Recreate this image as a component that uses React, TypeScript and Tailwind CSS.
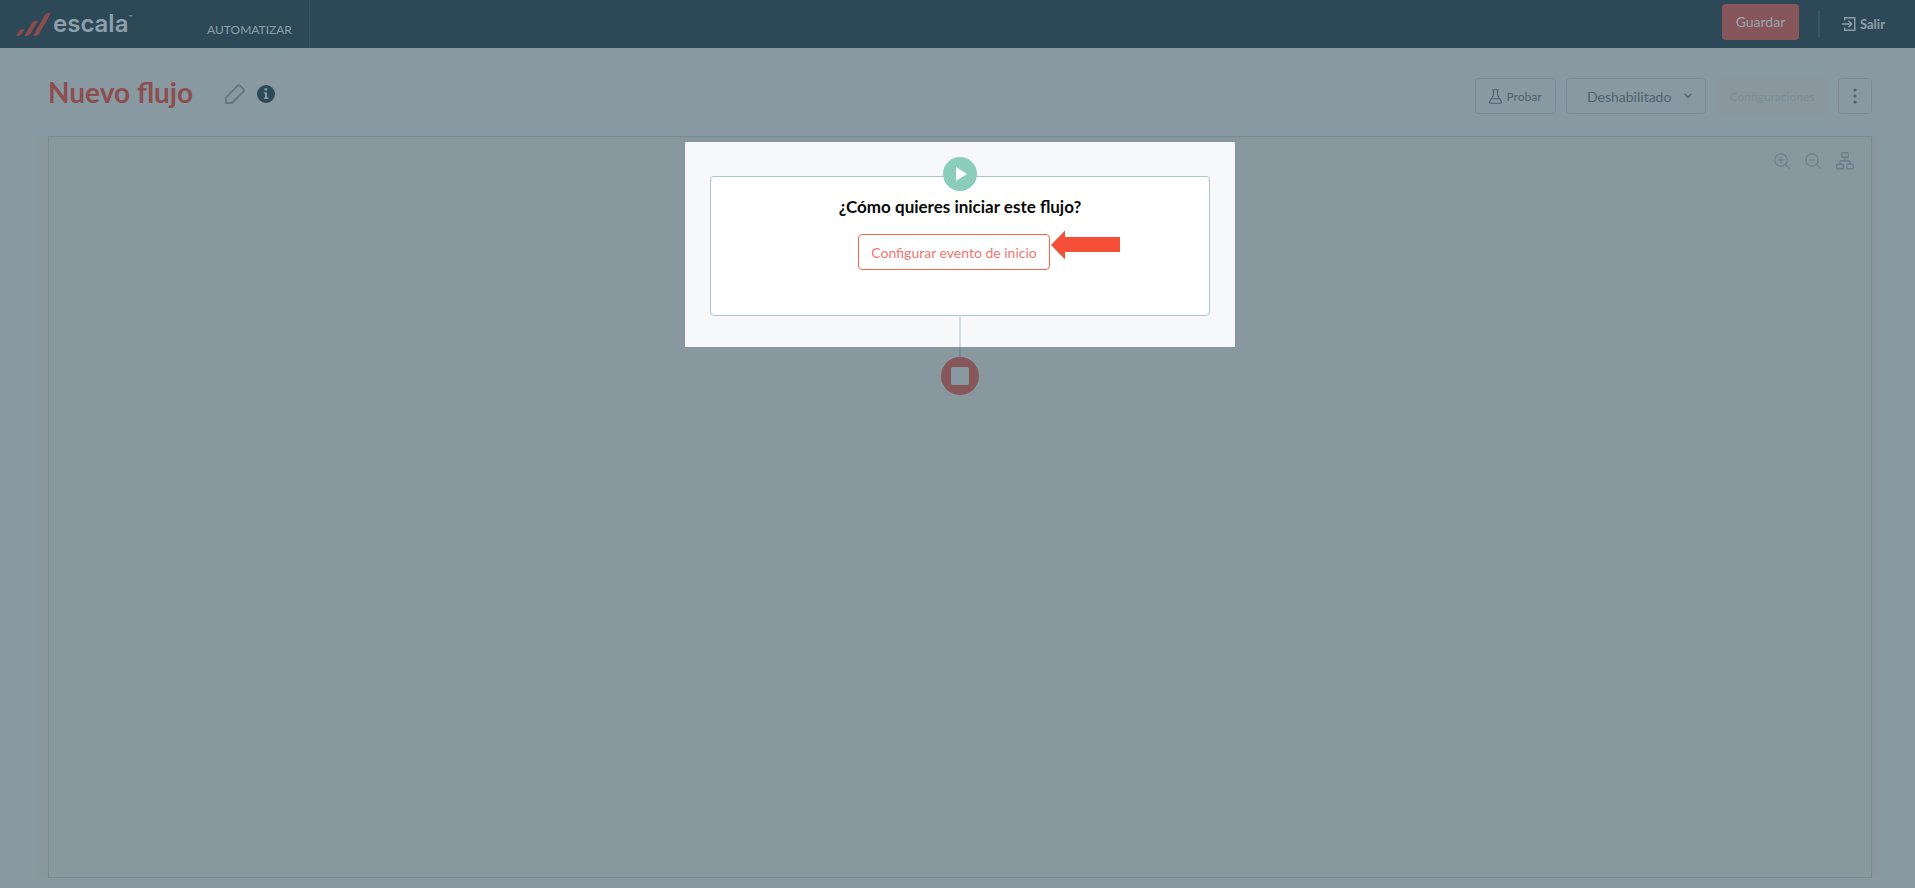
import React, { useState } from 'react'

const Logo: React.FC = () => (
  <a href="#inicio" aria-label="escala" className="flex items-center gap-0.5 text-[#8da0aa]">
    <svg width="35" height="24" viewBox="0 0 35 24" fill="#8b4c4c" aria-hidden="true">
      <path d="M0 24 L3.2 18.8 Q4.4 17 6.4 17 H8.6 L5.6 22 Q4.4 24 2.2 24 Z" />
      <path d="M8.4 24 L15.6 11.4 Q17 9 19.4 9 H22 L14.4 22 Q13.2 24 11 24 Z" />
      <path d="M17 24 L28.6 3.4 Q30 1 32.6 1 H35 L23 22 Q21.8 24 19.6 24 Z" />
    </svg>
    <span className="flex items-start font-['Inter','Lato',sans-serif]">
      <span className="text-[24px] leading-6 font-semibold">escala</span>
      <span className="text-[6px] leading-3 font-semibold">™</span>
    </span>
  </a>
)

const ExitIcon: React.FC = () => (
  <svg width="14" height="16" viewBox="0 0 14 16" fill="none" stroke="currentColor" strokeWidth="1.4" aria-hidden="true">
    <path d="M2.7 4.5 V1.7 H12.8 V14.3 H2.7 V11.5" />
    <path d="M0 8 H9.5 M6.5 4.8 L9.7 8 L6.5 11.2" />
  </svg>
)

const PencilIcon: React.FC = () => (
  <svg width="20" height="20" viewBox="0 0 20 20" fill="none" stroke="#66767f" strokeWidth="1.8" strokeLinejoin="round" aria-hidden="true">
    <path d="M1 19 V13.4 L12.4 1.9 Q13.8 0.6 15.2 1.9 L18.4 5.1 Q19.6 6.4 18.4 7.7 L6.8 19 Z" />
  </svg>
)

const InfoIcon: React.FC = () => (
  <svg width="18" height="18" viewBox="0 0 18 18" aria-hidden="true">
    <circle cx="9" cy="9" r="9" fill="#2d4a59" />
    <circle cx="8.8" cy="4.4" r="1.4" fill="#8899a1" />
    <path d="M6.8 7.2 H10 V12.4 H11.4 V14 H6.8 V12.4 H8 V8.7 H6.8 Z" fill="#8899a1" />
  </svg>
)

const FlaskIcon: React.FC = () => (
  <svg width="13" height="15" viewBox="0 0 13 15" fill="none" stroke="currentColor" strokeWidth="1.1" strokeLinejoin="round" aria-hidden="true">
    <path d="M3 0.8 H10 M4.5 0.8 V6 L0.7 12.6 Q0.2 14.2 1.6 14.2 H11.4 Q12.8 14.2 12.3 12.6 L8.5 6 V0.8 M2.4 9.8 H10.6" />
  </svg>
)

const ZoomIcon: React.FC<{ plus?: boolean }> = ({ plus }) => (
  <svg width="16" height="16" viewBox="0 0 16 16" fill="none" stroke="currentColor" strokeWidth="1.2" aria-hidden="true">
    <circle cx="7" cy="7" r="6.2" />
    <path d="M11.4 11.4 L15.5 15.5 M4 7 H10" />
    {plus && <path d="M7 4 V10" />}
  </svg>
)

const TreeIcon: React.FC = () => (
  <svg width="18" height="18" viewBox="0 0 18 18" fill="none" stroke="currentColor" strokeWidth="1.4" aria-hidden="true">
    <rect x="5.7" y="0.7" width="6.6" height="4.6" rx="0.8" />
    <rect x="0.7" y="12.2" width="6.6" height="4.6" rx="0.8" />
    <rect x="10.7" y="12.2" width="6.6" height="4.6" rx="0.8" />
    <path d="M9 5.3 V8.8 M4 12.2 V10 Q4 8.8 5.2 8.8 H12.8 Q14 8.8 14 10 V12.2" />
  </svg>
)

const App: React.FC = () => {
  const [estado, setEstado] = useState('Deshabilitado')

  return (
    <div className="flex min-h-screen flex-col bg-[#8899a1] font-['Lato','Open_Sans',sans-serif]">
      {/* Barra superior */}
      <header className="flex h-12 items-stretch justify-between bg-[#2d4857] text-[#8da0aa]">
        <div className="flex">
          <div className="flex w-[190px] items-center pl-4">
            <Logo />
          </div>
          <nav className="flex w-[120px] items-end justify-center border-r border-[#3a5361] pb-2.5">
            <a href="#automatizar" className="text-[12px] leading-4">AUTOMATIZAR</a>
          </nav>
        </div>

        <div className="flex items-center pr-[30px]">
          <button className="mb-1 h-9 w-[77px] rounded bg-[#86565a] pb-0.5 text-[14px] text-[#9ba5b1]">Guardar</button>
          <div className="mr-[22px] ml-[19px] h-[26px] w-0.5 bg-[#3c5563]" />
          <a href="#salir" className="flex items-center gap-1 text-[13px] leading-4 font-bold">
            <ExitIcon />
            <span>Salir</span>
          </a>
        </div>
      </header>

      {/* Título y acciones */}
      <div className="flex h-[88px] items-center justify-between pr-[43px] pl-12">
        <div className="flex items-center">
          <h1 className="text-[28px] leading-9 font-bold text-[#8d4e4f]">Nuevo flujo</h1>
          <button aria-label="Editar nombre" className="ml-8 pt-1"><PencilIcon /></button>
          <button aria-label="Información" className="ml-3 pt-1"><InfoIcon /></button>
        </div>

        <div className="flex items-center pt-2 text-[#4f636e]">
          <button className="flex h-9 w-[81px] items-center justify-center gap-1 rounded border border-[#788b94] text-[12px]">
            <FlaskIcon />
            <span className="pt-0.5">Probar</span>
          </button>
          <div className="relative ml-2.5">
            <select
              aria-label="Estado del flujo"
              value={estado}
              onChange={(e) => setEstado(e.target.value)}
              className="h-9 w-[140px] appearance-none rounded border border-[#788b94] bg-transparent pl-5 text-[14px]"
            >
              <option>Deshabilitado</option>
              <option>Habilitado</option>
            </select>
            <svg className="pointer-events-none absolute top-[15px] right-3.5" width="8" height="6" viewBox="0 0 8 6" fill="none" stroke="currentColor" strokeWidth="1.4" aria-hidden="true">
              <path d="M1 1 L4 4.4 L7 1" />
            </svg>
          </div>
          <button disabled className="ml-2.5 h-9 w-[112px] rounded bg-[#8a979f] pt-0.5 text-[12px] text-[#7c8d96]">Configuraciones</button>
          <button aria-label="Más opciones" className="ml-2.5 flex h-9 w-[34px] items-center justify-center rounded border border-[#788b94]">
            <svg width="4" height="16" viewBox="0 0 4 16" fill="currentColor" aria-hidden="true">
              <circle cx="2" cy="2" r="1.6" />
              <circle cx="2" cy="8" r="1.6" />
              <circle cx="2" cy="14" r="1.6" />
            </svg>
          </button>
        </div>
      </div>

      {/* Lienzo del flujo */}
      <main className="mx-9 mb-2.5 flex flex-1 bg-[#89979f] pr-[7px] pl-3">
        <div className="relative flex flex-1 flex-col items-center border border-[#788b94] pt-[5px]">
          <div className="absolute top-[15px] right-[17px] flex items-center gap-[15px] text-[#6b7f89]">
            <button aria-label="Acercar"><ZoomIcon plus /></button>
            <button aria-label="Alejar"><ZoomIcon /></button>
            <button aria-label="Ordenar"><TreeIcon /></button>
          </div>

          <section className="flex w-[550px] flex-col items-center bg-[#f6f8fa] px-[25px] pt-[34px]">
            <div className="relative flex h-[140px] w-full flex-col items-center rounded border border-[#adc4cf] bg-white pt-[18px]">
              <svg className="absolute -top-5" width="34" height="34" viewBox="0 0 34 34" aria-hidden="true">
                <circle cx="17" cy="17" r="17" fill="#8acdb8" />
                <path d="M13 10 L24 17 L13 24 Z" fill="#fff" />
              </svg>
              <h2 className="text-[17px] leading-6 font-bold text-[#0a0a0a]">¿Cómo quieres iniciar este flujo?</h2>
              <div className="relative mt-[15px] mr-3">
                <button className="h-9 w-48 rounded border border-[#f2654f] text-[14px] text-[#f07670]">
                  Configurar evento de inicio
                </button>
                <svg className="absolute -top-1 left-full" width="70" height="30" viewBox="0 0 70 30" fill="#f64f37" aria-hidden="true">
                  <path d="M1 15 L15 0.5 V7 H70 V22 H15 V29.5 Z" />
                </svg>
              </div>
            </div>
            <div className="mt-px h-[30px] w-0.5 bg-[#d0dce2]" />
          </section>

          <div className="h-2.5 w-0.5 bg-[#768b95]" />
          <svg width="38" height="38" viewBox="0 0 38 38" aria-hidden="true">
            <circle cx="19" cy="19" r="19" fill="#86565a" />
            <rect x="10" y="10" width="18" height="18" rx="2" fill="#8899a1" />
          </svg>
        </div>
      </main>
    </div>
  )
}

export default App
